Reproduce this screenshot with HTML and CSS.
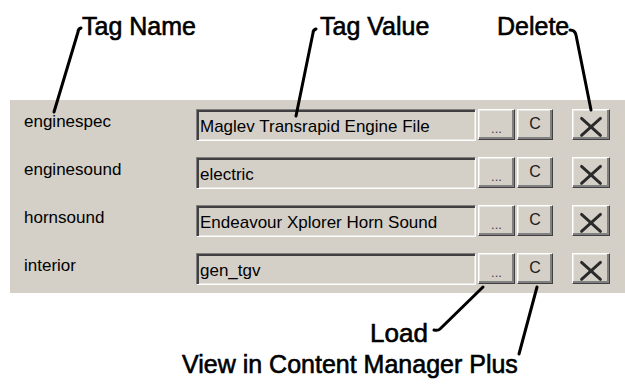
FILE: index.html
```html
<!DOCTYPE html>
<html>
<head>
<meta charset="utf-8">
<link rel="stylesheet" href="styles.css">
</head>
<body>
<div class="page">
  <div class="callouts-top">
    <span class="callout">Tag Name</span>
    <span class="callout">Tag Value</span>
    <span class="callout">Delete</span>
  </div>

  <div class="panel">
    <div class="row">
      <span class="tag-name">enginespec</span>
      <div class="field">Maglev Transrapid Engine File</div>
      <button class="btn btn-load">...</button>
      <button class="btn btn-view">C</button>
      <button class="btn btn-del"><svg viewBox="0 0 38 31" width="38" height="31"><path d="M9 9 L29 27 M29 9 L9 27"/></svg></button>
    </div>
    <div class="row">
      <span class="tag-name">enginesound</span>
      <div class="field">electric</div>
      <button class="btn btn-load">...</button>
      <button class="btn btn-view">C</button>
      <button class="btn btn-del"><svg viewBox="0 0 38 31" width="38" height="31"><path d="M9 9 L29 27 M29 9 L9 27"/></svg></button>
    </div>
    <div class="row">
      <span class="tag-name">hornsound</span>
      <div class="field">Endeavour Xplorer Horn Sound</div>
      <button class="btn btn-load">...</button>
      <button class="btn btn-view">C</button>
      <button class="btn btn-del"><svg viewBox="0 0 38 31" width="38" height="31"><path d="M9 9 L29 27 M29 9 L9 27"/></svg></button>
    </div>
    <div class="row">
      <span class="tag-name">interior</span>
      <div class="field">gen_tgv</div>
      <button class="btn btn-load">...</button>
      <button class="btn btn-view">C</button>
      <button class="btn btn-del"><svg viewBox="0 0 38 31" width="38" height="31"><path d="M9 9 L29 27 M29 9 L9 27"/></svg></button>
    </div>
  </div>

  <div class="callouts-bottom">
    <div class="callout callout-load">Load</div>
    <div class="callout callout-view">View in Content Manager Plus</div>
  </div>

  <svg class="leaders" viewBox="0 0 625 384" width="625" height="384">
    <path d="M81 28 Q78 29 78 32 L54 112"/>
    <path d="M316 29 Q313 30 313 33 L296 116"/>
    <path d="M570 30 Q575 30 576 35 L591 110"/>
    <path d="M483 287 L440 329 Q438 331 434 330"/>
    <path d="M537 287 L519 354"/>
  </svg>
</div>
</body>
</html>
```

FILE: styles.css
```css
* { box-sizing: border-box; }

html, body {
  margin: 0;
  padding: 0;
  background: #ffffff;
}

.page {
  position: relative;
  width: 625px;
  height: 384px;
  overflow: hidden;
  font-family: "Liberation Sans", Arial, sans-serif;
  color: #000;
}

.callouts-top {
  height: 100px;
  display: grid;
  grid-template-columns: 82px 238px 177px auto;
  padding-top: 14px;
}

.callouts-top .callout:nth-child(1) { grid-column: 2; }
.callouts-top .callout:nth-child(2) { grid-column: 3; }
.callouts-top .callout:nth-child(3) { grid-column: 4; }

.callout {
  font-size: 25px;
  line-height: 25px;
  -webkit-text-stroke: 0.6px #000;
  white-space: nowrap;
}

.panel {
  margin-left: 10px;
  background: #d4d0c8;
  padding: 9px 0 8px 14px;
  display: flex;
  flex-direction: column;
  gap: 16px;
}

.row {
  display: flex;
  align-items: flex-start;
  height: 32px;
}

.tag-name {
  width: 172px;
  font-size: 17px;
  line-height: 19px;
  padding-top: 3px;
}

.field {
  width: 280px;
  height: 32px;
  font-size: 17px;
  line-height: 19px;
  padding: 7px 0 0 3px;
  background: #d4d0c8;
  border: 1px solid;
  border-color: #808080 #ffffff #ffffff #808080;
  box-shadow: inset 2px 2px 0 #404040, inset -1px -1px 0 #e8e6e0;
  white-space: nowrap;
  overflow: hidden;
}

.btn {
  height: 31px;
  margin: 0;
  padding: 0;
  background: #d4d0c8;
  border: 1px solid;
  border-color: #ffffff #404040 #404040 #ffffff;
  box-shadow: inset -2px -2px 0 #808080, inset 1px 1px 0 #eae8e2;
  font-family: "Liberation Sans", Arial, sans-serif;
  color: #1a1a1a;
  display: flex;
  align-items: center;
  justify-content: center;
}

.btn-load {
  width: 37px;
  margin-left: 2px;
  font-size: 13px;
  line-height: 13px;
  padding-top: 8px;
  color: #444;
}

.btn-view {
  width: 36px;
  margin-left: 2px;
  font-size: 16px;
  line-height: 16px;
  padding-bottom: 2px;
}

.btn-del {
  width: 38px;
  margin-left: 19px;
}

.btn-del svg {
  display: block;
  fill: none;
  stroke: #2a2a2a;
  stroke-width: 3;
  stroke-linecap: round;
}

.callouts-bottom {
  padding-top: 27px;
}

.callout-load {
  font-size: 26px;
  line-height: 26px;
  padding-left: 370px;
}

.callout-view {
  margin-top: 6px;
  padding-left: 182px;
}

.leaders {
  position: absolute;
  left: 0;
  top: 0;
  pointer-events: none;
  fill: none;
  stroke: #000;
  stroke-width: 3;
  stroke-linecap: round;
  stroke-linejoin: round;
}
```
